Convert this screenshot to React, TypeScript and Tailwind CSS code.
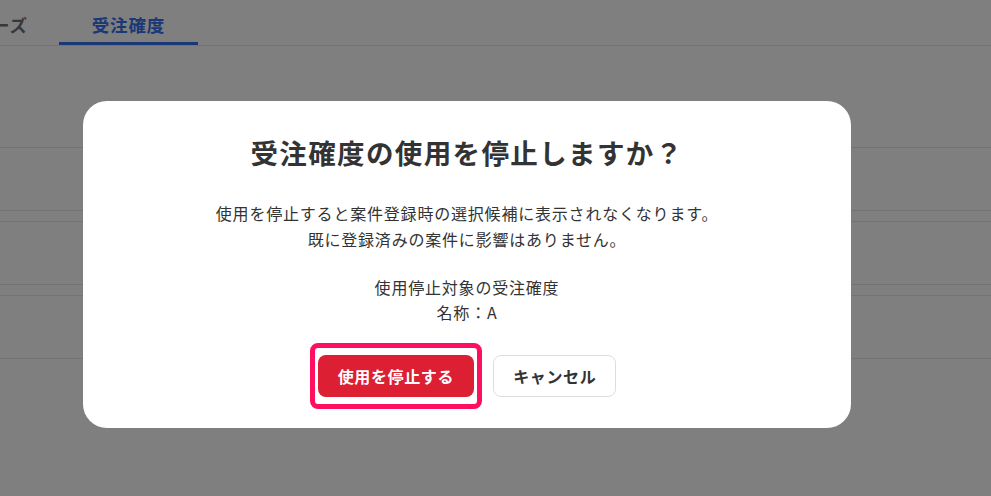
import React from "react";

export default function App() {
  const font = { fontFamily: '"Noto Sans CJK JP", "Noto Sans", sans-serif' };
  return (
    <div className="relative h-[496px] w-full overflow-hidden bg-white" style={font}>
      {/* Background page */}
      <div className="flex h-[46px] border-b border-[#e6e6e6]">
        <div className="-ml-[80px] flex h-[45px] w-[139px] items-center justify-center pl-[4px] pt-[6px] text-[17.5px] font-bold tracking-[0.05em] text-[#707070]">
          フェーズ
        </div>
        <div className="flex h-[45px] w-[139px] items-center justify-center border-b-[3px] border-[#3670ec] pt-[9px] text-[17.5px] font-bold tracking-[0.05em] text-[#3670ec]">
          受注確度
        </div>
      </div>
      <div className="h-[102px] border-b border-[#e6e6e6]" />
      <div className="h-[63px] border-b border-[#e6e6e6]" />
      <div className="h-[11px] border-b border-[#e6e6e6]" />
      <div className="h-[63px] border-b border-[#e6e6e6]" />
      <div className="h-[11px] border-b border-[#e6e6e6]" />
      <div className="h-[63px] border-b border-[#e6e6e6]" />

      {/* Overlay */}
      <div className="absolute inset-0 bg-black/50" />

      {/* Modal */}
      <div className="absolute left-[83px] top-[101px] flex w-[768px] flex-col items-center rounded-[24px] bg-white pb-[31px] pt-[31px] text-[#333333]">
        <h2 className="text-[27.5px] font-bold leading-[40px] tracking-[0.05em]">
          受注確度の使用を停止しますか？
        </h2>
        <div className="mt-[28px] text-center text-[16px] leading-[26px] tracking-[0.05em]">
          <p>使用を停止すると案件登録時の選択候補に表示されなくなります。</p>
          <p>既に登録済みの案件に影響はありません。</p>
        </div>
        <div className="mt-[23px] text-center text-[16px] leading-[25px] tracking-[0.05em]">
          <p>使用停止対象の受注確度</p>
          <p>名称：A</p>
        </div>
        <div className="mt-[30px] flex gap-[19px]">
          <div className="relative">
            <button className="flex h-[42px] items-center rounded-[8px] bg-[#dc1f33] px-[20px] text-[16px] font-bold tracking-[0.04em] text-white">
              使用を停止する
            </button>
            <div className="pointer-events-none absolute -bottom-[12px] -left-[8px] -right-[8px] -top-[12px] rounded-[8px] border-[5px] border-[#ff0f5f]" />
          </div>
          <button className="flex h-[42px] items-center rounded-[8px] border border-[#dddddd] bg-white px-[19px] text-[16px] font-bold tracking-[0.04em] text-[#333333]">
            キャンセル
          </button>
        </div>
      </div>
    </div>
  );
}
